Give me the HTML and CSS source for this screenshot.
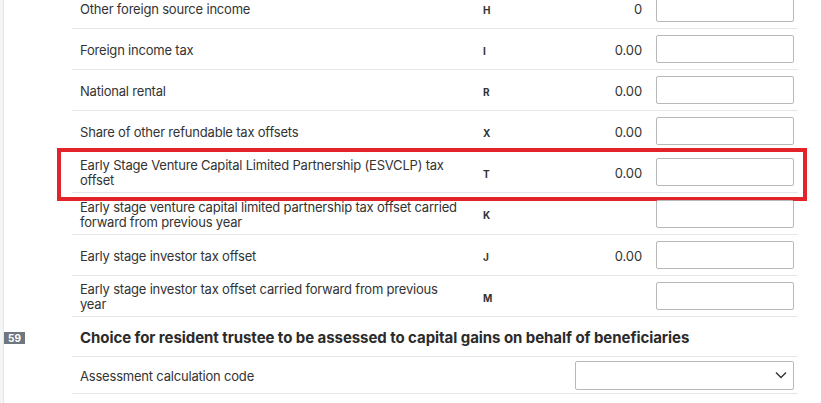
FILE: index.html
```html
<!DOCTYPE html>
<html lang="en">
<head>
<meta charset="utf-8">
<title>Tax return form</title>
<link rel="stylesheet" href="styles.css">
</head>
<body>
<div class="page">
  <div class="rail"></div>
  <div class="content">
    <div class="line">
      <div class="gutter"></div>
      <div class="row">
        <div class="label">Other foreign source income</div>
        <div class="code">H</div>
        <div class="value">0</div>
        <div class="field"><input class="input" type="text"></div>
      </div>
    </div>
    <div class="line">
      <div class="gutter"></div>
      <div class="row">
        <div class="label">Foreign income tax</div>
        <div class="code">I</div>
        <div class="value">0.00</div>
        <div class="field"><input class="input" type="text"></div>
      </div>
    </div>
    <div class="line">
      <div class="gutter"></div>
      <div class="row">
        <div class="label">National rental</div>
        <div class="code">R</div>
        <div class="value">0.00</div>
        <div class="field"><input class="input" type="text"></div>
      </div>
    </div>
    <div class="line">
      <div class="gutter"></div>
      <div class="row">
        <div class="label">Share of other refundable tax offsets</div>
        <div class="code">X</div>
        <div class="value">0.00</div>
        <div class="field"><input class="input" type="text"></div>
      </div>
    </div>
    <div class="line">
      <div class="gutter"></div>
      <div class="row marked">
        <div class="label">Early Stage Venture Capital Limited Partnership (ESVCLP) tax offset</div>
        <div class="code">T</div>
        <div class="value">0.00</div>
        <div class="field"><input class="input" type="text"></div>
        <span class="highlight"></span>
      </div>
    </div>
    <div class="line">
      <div class="gutter"></div>
      <div class="row tall">
        <div class="label">Early stage venture capital limited partnership tax offset carried forward from previous year</div>
        <div class="code">K</div>
        <div class="value"></div>
        <div class="field"><input class="input" type="text"></div>
      </div>
    </div>
    <div class="line">
      <div class="gutter"></div>
      <div class="row">
        <div class="label">Early stage investor tax offset</div>
        <div class="code">J</div>
        <div class="value">0.00</div>
        <div class="field"><input class="input" type="text"></div>
      </div>
    </div>
    <div class="line">
      <div class="gutter"></div>
      <div class="row">
        <div class="label">Early stage investor tax offset carried forward from previous year</div>
        <div class="code">M</div>
        <div class="value"></div>
        <div class="field"><input class="input" type="text"></div>
      </div>
    </div>
    <div class="line">
      <div class="gutter"><span class="badge">59</span></div>
      <div class="row heading">
        <h2 class="title">Choice for resident trustee to be assessed to capital gains on behalf of beneficiaries</h2>
      </div>
    </div>
    <div class="line">
      <div class="gutter"></div>
      <div class="row select-row">
        <div class="label">Assessment calculation code</div>
        <div class="select">
          <svg class="chevron" width="12" height="8" viewBox="0 0 12 8" aria-hidden="true"><path d="M1 1.5 L6 6.5 L11 1.5" fill="none" stroke="#333" stroke-width="1.4"/></svg>
        </div>
      </div>
    </div>
  </div>
</div>
</body>
</html>
```
FILE: styles.css
```css
* { box-sizing: border-box; }
html, body { margin: 0; padding: 0; background: #fff; }
body {
  font-family: Inter, "Liberation Sans", Arial, sans-serif;
  font-size: 13px;
  color: #333;
  overflow: hidden;
}
.page {
  display: flex;
  margin-top: -12px;
  min-height: 430px;
}
.rail {
  width: 4px;
  flex: none;
  background: #f4f5f7;
  border-right: 1px solid #e3e5e9;
}
.content {
  flex: none;
  width: 794px;
}
.line {
  display: flex;
}
.gutter {
  width: 68px;
  flex: none;
  display: flex;
  align-items: center;
}
.row {
  position: relative;
  width: 726px;
  height: 41px;
  padding: 0 4px 0 8px;
  border-bottom: 1px solid #e6e6e6;
  display: grid;
  grid-template-columns: 403px 40px 1fr 152px;
  align-items: center;
}
.row.tall { height: 42px; }
.label {
  padding-right: 21px;
  padding-top: 2px;
  line-height: 15px;
  letter-spacing: -0.2px;
}
.code {
  font-size: 10px;
  font-weight: 700;
  color: #333;
  padding-top: 3px;
}
.value {
  text-align: right;
  padding-top: 2px;
  letter-spacing: -0.1px;
}
.field {
  padding-left: 14px;
}
.input {
  display: block;
  width: 138px;
  height: 28px;
  margin: 0;
  border: 1px solid #b8b8b8;
  border-radius: 2px;
  background: #fff;
  font: inherit;
}
.highlight {
  position: absolute;
  top: -4px;
  left: -15px;
  right: -9px;
  bottom: -9px;
  border: 4px solid #e2232a;
  pointer-events: none;
}
.row.heading {
  height: 40px;
  display: flex;
}
.title {
  margin: 0;
  padding-top: 1px;
  font-size: 15px;
  font-weight: 700;
  color: #2b2b2b;
  letter-spacing: -0.06px;
}
.badge {
  display: inline-block;
  width: 21px;
  height: 12px;
  margin-top: 2px;
  background: #6e7780;
  color: #fff;
  font-size: 10px;
  font-weight: 700;
  line-height: 12px;
  text-align: center;
}
.row.select-row {
  height: 37px;
  display: flex;
  justify-content: space-between;
}
.select-row .label { padding-top: 2px; }
.select {
  width: 219px;
  height: 29px;
  border: 1px solid #b8b8b8;
  border-radius: 2px;
  display: flex;
  align-items: center;
  justify-content: flex-end;
  padding-right: 6px;
}
.chevron { display: block; }
```
